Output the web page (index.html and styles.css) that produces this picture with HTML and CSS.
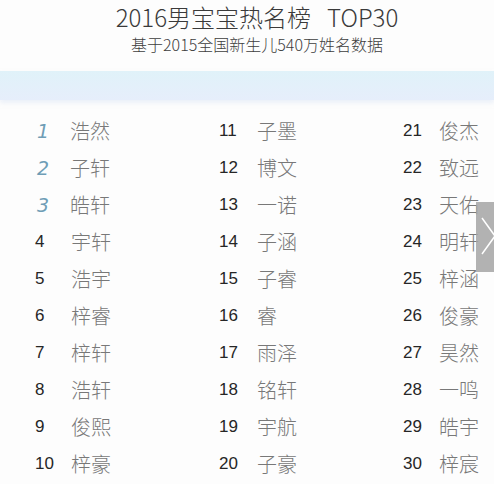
FILE: index.html
```html
<!DOCTYPE html>
<html lang="zh">
<head>
<meta charset="utf-8">
<title>2016男宝宝热名榜 TOP30</title>
<link rel="stylesheet" href="styles.css">
</head>
<body>
<div class="page">
  <header class="head">
    <h1 class="title">2016男宝宝热名榜<span class="top">TOP30</span></h1>
    <p class="sub">基于2015全国新生儿540万姓名数据</p>
  </header>
  <div class="band"></div>
  <div class="list">
    <div class="col c1">
      <div class="row"><span class="num hi">1</span><span class="name">浩然</span></div>
      <div class="row"><span class="num hi">2</span><span class="name">子轩</span></div>
      <div class="row"><span class="num hi">3</span><span class="name">皓轩</span></div>
      <div class="row"><span class="num">4</span><span class="name">宇轩</span></div>
      <div class="row"><span class="num">5</span><span class="name">浩宇</span></div>
      <div class="row"><span class="num">6</span><span class="name">梓睿</span></div>
      <div class="row"><span class="num">7</span><span class="name">梓轩</span></div>
      <div class="row"><span class="num">8</span><span class="name">浩轩</span></div>
      <div class="row"><span class="num">9</span><span class="name">俊熙</span></div>
      <div class="row"><span class="num">10</span><span class="name">梓豪</span></div>
    </div>
    <div class="col c2">
      <div class="row"><span class="num">11</span><span class="name">子墨</span></div>
      <div class="row"><span class="num">12</span><span class="name">博文</span></div>
      <div class="row"><span class="num">13</span><span class="name">一诺</span></div>
      <div class="row"><span class="num">14</span><span class="name">子涵</span></div>
      <div class="row"><span class="num">15</span><span class="name">子睿</span></div>
      <div class="row"><span class="num">16</span><span class="name">睿</span></div>
      <div class="row"><span class="num">17</span><span class="name">雨泽</span></div>
      <div class="row"><span class="num">18</span><span class="name">铭轩</span></div>
      <div class="row"><span class="num">19</span><span class="name">宇航</span></div>
      <div class="row"><span class="num">20</span><span class="name">子豪</span></div>
    </div>
    <div class="col c3">
      <div class="row"><span class="num">21</span><span class="name">俊杰</span></div>
      <div class="row"><span class="num">22</span><span class="name">致远</span></div>
      <div class="row"><span class="num">23</span><span class="name">天佑</span></div>
      <div class="row"><span class="num">24</span><span class="name">明轩</span></div>
      <div class="row"><span class="num">25</span><span class="name">梓涵</span></div>
      <div class="row"><span class="num">26</span><span class="name">俊豪</span></div>
      <div class="row"><span class="num">27</span><span class="name">昊然</span></div>
      <div class="row"><span class="num">28</span><span class="name">一鸣</span></div>
      <div class="row"><span class="num">29</span><span class="name">皓宇</span></div>
      <div class="row"><span class="num">30</span><span class="name">梓宸</span></div>
    </div>
  </div>
  <div class="next" aria-label="next">
    <svg width="18" height="70" viewBox="0 0 18 70"><polyline points="6,16 19,34 6,52" fill="none" stroke="#ffffff" stroke-width="1.5"/></svg>
  </div>
</div>
</body>
</html>
```

FILE: styles.css
```css
html, body {
  margin: 0;
  padding: 0;
  background: #fdfdfd;
}
.page {
  position: relative;
  width: 494px;
  height: 484px;
  overflow: hidden;
  font-family: "Noto Sans CJK SC", "Noto Sans", sans-serif;
}
.head {
  padding: 2px 0 0 20px;
  text-align: center;
}
.title {
  margin: 0;
  font-size: 24px;
  line-height: 30px;
  font-weight: 300;
  color: #3a3a3a;
}
.top {
  margin-left: 16px;
}
.sub {
  margin: 2px 0 0;
  font-size: 16px;
  line-height: 20px;
  font-weight: 300;
  color: #3e3e3e;
}
.band {
  margin-top: 17px;
  height: 29px;
  background: linear-gradient(#e0f2f9, #e6eefb);
  box-shadow: 0 3px 4px rgba(220, 230, 245, 0.5);
}
.list {
  display: grid;
  grid-template-columns: 184px 184px 1fr;
  padding: 12px 0 0 35px;
}
.row {
  display: flex;
  align-items: center;
  height: 37px;
}
.num {
  width: 36px;
  font-family: "Liberation Sans", Arial, sans-serif;
  font-size: 17px;
  color: #262626;
  flex: none;
}
.c2 .num { width: 38px; }
.num.hi {
  font-family: "DejaVu Sans", sans-serif;
  font-style: italic;
  font-weight: 400;
  font-size: 19px;
  color: #6f9db6;
  padding-left: 2px;
  width: 33px;
}
.name {
  font-size: 20px;
  font-weight: 300;
  color: #787878;
  line-height: 1;
}
.next {
  position: absolute;
  left: 476px;
  top: 202px;
  width: 18px;
  height: 70px;
  background: rgba(165, 165, 165, 0.85);
}
.next svg {
  display: block;
}
```
